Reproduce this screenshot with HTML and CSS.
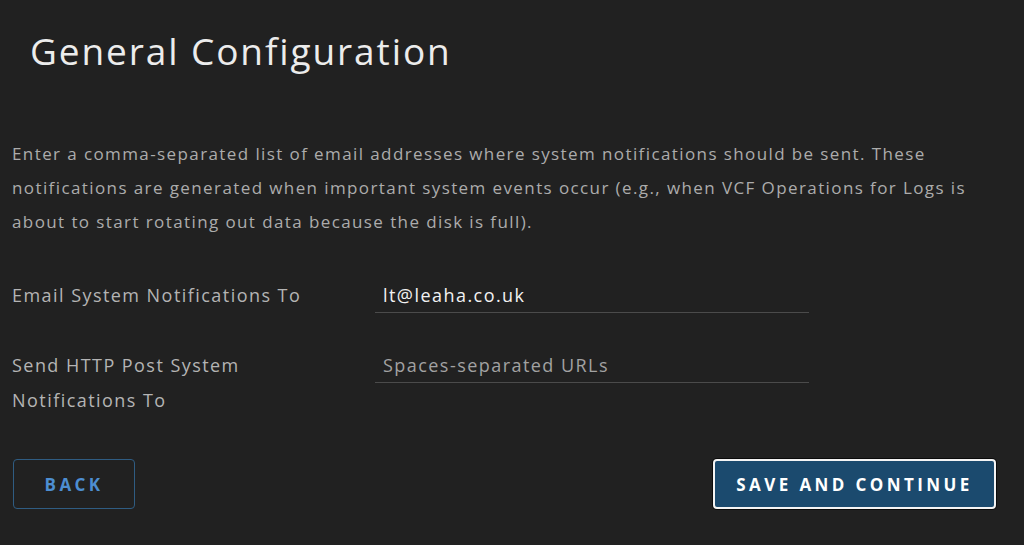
FILE: index.html
```html
<!DOCTYPE html>
<html>
<head>
<meta charset="utf-8">
<link rel="stylesheet" href="styles.css">
</head>
<body>
<div class="page">
  <h1 class="title">General Configuration</h1>
  <p class="intro">Enter a comma-separated list of email addresses where system notifications should be sent. These notifications are generated when important system events occur (e.g., when VCF Operations for Logs is about to start rotating out data because the disk is full).</p>
  <div class="form">
    <div class="row">
      <label class="label">Email System Notifications To</label>
      <div class="field"><span class="value">lt@leaha.co.uk</span></div>
    </div>
    <div class="row">
      <label class="label">Send HTTP Post System Notifications To</label>
      <div class="field"><span class="placeholder">Spaces-separated URLs</span></div>
    </div>
  </div>
  <div class="actions">
    <button class="btn btn-outline">BACK</button>
    <button class="btn btn-primary">SAVE AND CONTINUE</button>
  </div>
</div>
</body>
</html>
```
FILE: styles.css
```css
html, body {
  margin: 0;
  padding: 0;
  background: #212121;
  height: 100%;
  overflow: hidden;
}
.page {
  font-family: "Open Sans", "Liberation Sans", sans-serif;
  padding: 0 28px 0 12px;
}
.title {
  margin: 0;
  padding: 27px 0 0 18px;
  font-size: 37px;
  font-weight: 400;
  line-height: 48px;
  letter-spacing: 1.9px;
  color: #ececec;
}
.intro {
  margin: 62px 0 0 0;
  font-size: 17px;
  line-height: 34px;
  letter-spacing: 1.4px;
  color: #acacac;
}
.form {
  margin-top: 37px;
  display: flex;
  flex-direction: column;
  gap: 33px;
}
.row {
  display: flex;
  align-items: flex-start;
}
.label {
  width: 300px;
  flex: none;
  font-size: 18px;
  line-height: 35px;
  letter-spacing: 1.45px;
  color: #b4b4b4;
  padding-top: 2px;
  margin-right: 63px;
}
.field {
  width: 426px;
  height: 34px;
  padding-top: 2px;
  border-bottom: 1px solid #4b4b4b;
  padding-left: 8px;
  font-size: 18px;
  line-height: 34px;
  letter-spacing: 1.45px;
}
.value { color: #f2f2f2; }
.placeholder { color: #a2a2a2; }
.actions {
  margin-top: 41px;
  display: flex;
  justify-content: space-between;
  align-items: center;
  padding-left: 1px;
}
.btn {
  font-family: "Open Sans", "Liberation Sans", sans-serif;
  font-weight: 700;
  font-size: 17px;
  letter-spacing: 3.4px;
  border-radius: 4px;
  height: 50px;
  cursor: pointer;
  padding: 0;
}
.btn-outline {
  width: 122px;
  background: transparent;
  border: 1px solid #2f5c82;
  color: #4d8ed1;
}
.btn-primary {
  width: 283px;
  background: #1b4a6e;
  border: 2px solid #f4f4f4;
  color: #ffffff;
  box-shadow: 0 0 0 1px #0b0b0b;
}
```
